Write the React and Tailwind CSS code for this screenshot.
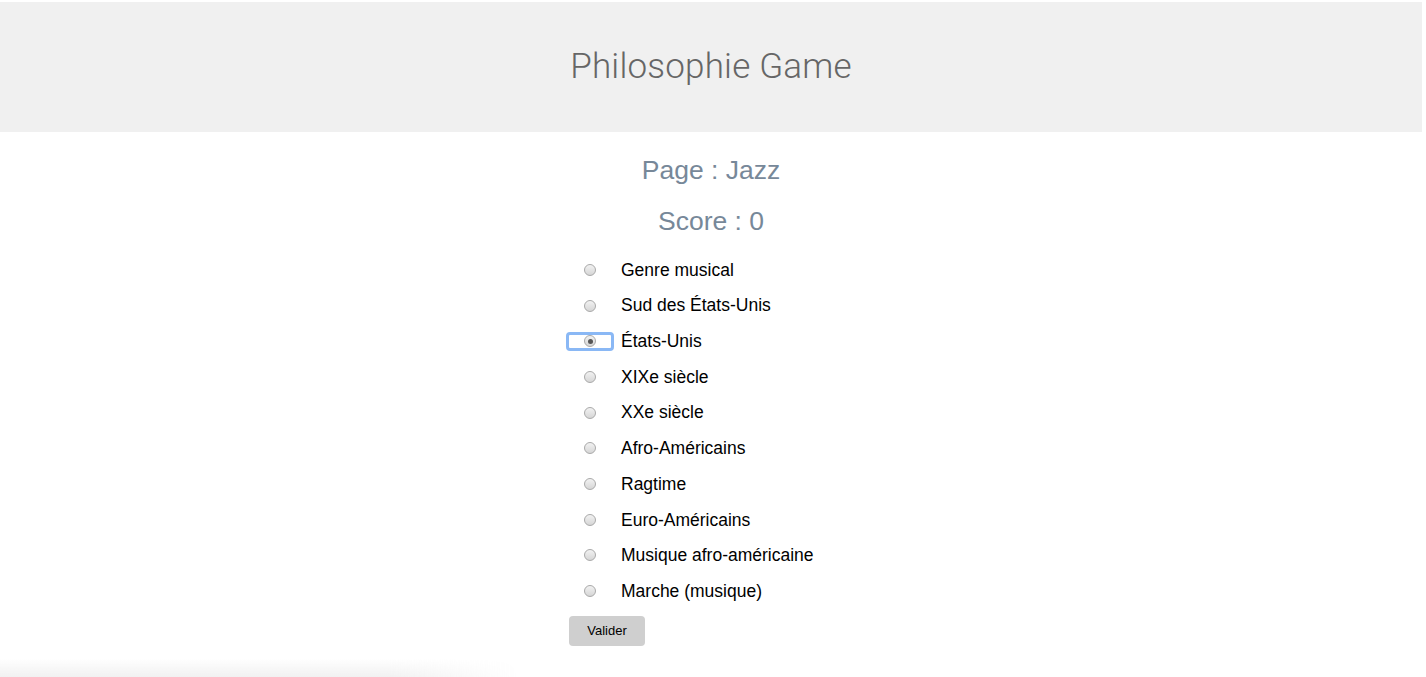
import React from 'react';

const choices = [
  'Genre musical',
  'Sud des États-Unis',
  'États-Unis',
  'XIXe siècle',
  'XXe siècle',
  'Afro-Américains',
  'Ragtime',
  'Euro-Américains',
  'Musique afro-américaine',
  'Marche (musique)',
];

const Radio = ({ checked }) => (
  <span
    className={`flex items-center justify-center w-[48px] h-[19px] rounded-[4px] ${
      checked ? 'border-[3px] border-[#8ab8f5]' : 'border-[3px] border-transparent'
    }`}
  >
    <span className="flex items-center justify-center w-[12px] h-[12px] rounded-full border border-[#a9a9a9] bg-gradient-to-b from-[#f2f2f2] to-[#d6d6d6]">
      {checked && <span className="w-[5px] h-[5px] rounded-full bg-[#555555]"></span>}
    </span>
  </span>
);

const App = () => (
  <div className="relative min-h-[677px] bg-white font-['Liberation_Sans',Arial,sans-serif] overflow-hidden">
    <header className="mt-[2px] mr-[4px] h-[130px] bg-[#f0f0f0] flex items-center justify-center">
      <h1 className="text-[35px] text-[#666666] font-['Roboto',sans-serif] font-light tracking-[0.2px]">Philosophie Game</h1>
    </header>

    <main className="mr-[4px] flex flex-col items-center">
      <h2 className="mt-[23px] text-[26.5px] leading-[30px] text-[#778899]">Page : Jazz</h2>
      <h2 className="mt-[21px] text-[26.5px] leading-[30px] text-[#778899]">Score : 0</h2>

      <div className="mt-[16px] w-[284px]">
        <div className="flex flex-col">
          {choices.map((c, i) => (
            <label key={c} className="flex items-center h-[35.7px] text-[17.5px] text-black">
              <span className="-ml-[3px]"><Radio checked={i === 2} /></span>
              <span className="ml-[7px]">{c}</span>
            </label>
          ))}
        </div>
        <button className="mt-[7px] w-[76px] h-[30px] rounded-[4px] bg-[#cfcfcf] text-[13px] text-black">
          Valider
        </button>
      </div>
    </main>

    <div className="absolute left-0 bottom-0 w-[520px] h-[18px] bg-gradient-to-b from-white to-[#ececec] opacity-70 [mask-image:linear-gradient(to_right,black_75%,transparent)]"></div>
  </div>
);

export default App;
